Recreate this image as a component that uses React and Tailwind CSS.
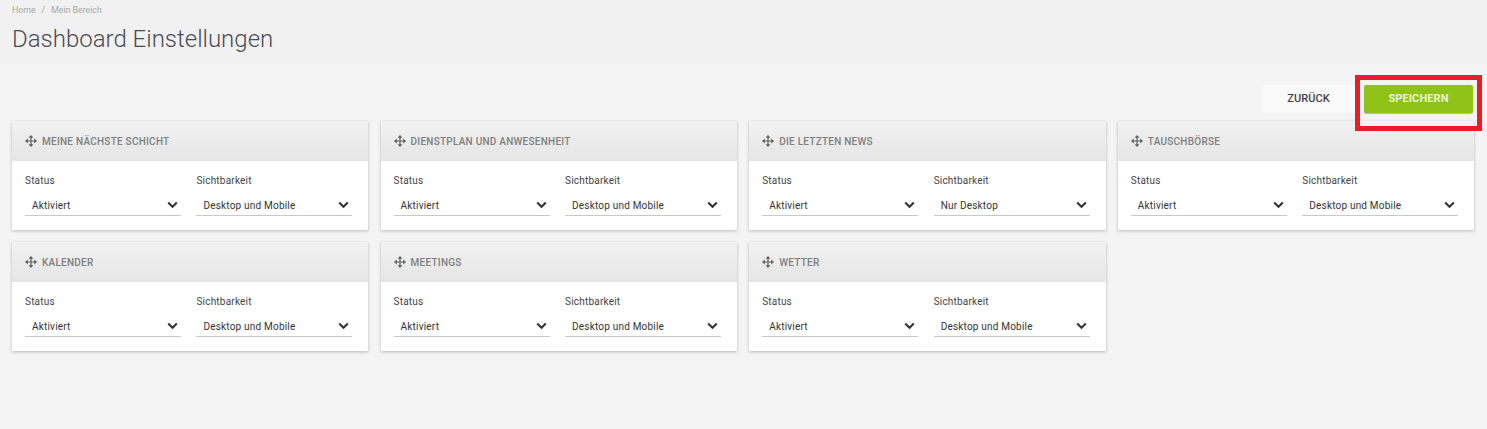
import React from "react";

function Move() {
  return (
    <svg width="12" height="12" viewBox="0 0 12 12" fill="#5f5f5f" className="shrink-0">
      <path d="M6 0 8.4 2.8H6.6V5.4H9.2V3.6L12 6 9.2 8.4V6.6H6.6V9.2H8.4L6 12 3.6 9.2H5.4V6.6H2.8V8.4L0 6 2.8 3.6V5.4H5.4V2.8H3.6Z" />
    </svg>
  );
}

function Chevron() {
  return (
    <svg width="11" height="8" viewBox="0 0 11 8" fill="none" className="shrink-0">
      <path d="M1.2 1.6 5.5 5.8 9.8 1.6" stroke="#333" strokeWidth="2.1" />
    </svg>
  );
}

function Field({ label, value }) {
  return (
    <div className="flex-1 min-w-0">
      <div className="text-[10px] leading-[14px] text-[#444] tracking-[0.2px]">{label}</div>
      <div className="mt-[7px] h-[21px] flex items-center justify-between pl-[7px] pr-[3px] border-b border-[#c8c8c8]">
        <span className="text-[10px] text-[#333] tracking-[0.2px]">{value}</span>
        <Chevron />
      </div>
    </div>
  );
}

function Card({ title, vis = "Desktop und Mobile" }) {
  return (
    <div className="bg-white h-[109px] shadow-[0_1px_3px_rgba(0,0,0,0.25)]">
      <div className="h-[40px] flex items-center gap-[5px] pl-[13px] bg-gradient-to-b from-[#f2f2f2] to-[#e5e5e5]">
        <Move />
        <span className="text-[10px] font-medium tracking-[0.25px] text-[#808080] uppercase">{title}</span>
      </div>
      <div className="flex gap-[15.5px] pl-[13px] pr-[16px] pt-[13px]">
        <Field label="Status" value="Aktiviert" />
        <Field label="Sichtbarkeit" value={vis} />
      </div>
    </div>
  );
}

export default function App() {
  return (
    <div className="min-h-[429px] bg-[#f4f4f4] font-['Roboto',sans-serif]">
      <div className="h-[64px] bg-[#f1f1f1] pl-[12px] pt-[4px]">
        <div className="flex gap-[6px] text-[8.75px] leading-[12px] text-[#a8a8a8]">
          <span>Home</span>
          <span>/</span>
          <span>Mein Bereich</span>
        </div>
        <h1 className="mt-[8px] text-[24px] leading-[30px] font-light text-[#4b4b55]">Dashboard Einstellungen</h1>
      </div>
      <div className="h-[57px] pt-[21px] pr-[14px] flex justify-end">
        <button className="w-[93px] h-[28px] rounded-[2px] bg-[#f9f9f9] text-[11px] font-medium tracking-[0.1px] text-[#444]">ZURÜCK</button>
        <div className="relative ml-[9px]">
          <button className="w-[109px] h-[28px] rounded-[2px] bg-[#8fc31a] text-[11px] font-bold tracking-[0.1px] text-[#eaf5cf] shadow-[0_1px_1px_rgba(0,0,0,0.25)]">SPEICHERN</button>
          <div className="absolute -left-[9px] -right-[9px] -top-[10px] -bottom-[10px] border-[5px] border-[#ed1c24] pointer-events-none" />
        </div>
      </div>
      <div className="grid grid-cols-4 gap-x-[12.2px] gap-y-[12px] pl-[12px] pr-[12.8px]">
        <Card title="Meine nächste Schicht" />
        <Card title="Dienstplan und Anwesenheit" />
        <Card title="Die letzten News" vis="Nur Desktop" />
        <Card title="Tauschbörse" />
        <Card title="Kalender" />
        <Card title="Meetings" />
        <Card title="Wetter" />
      </div>
    </div>
  );
}
